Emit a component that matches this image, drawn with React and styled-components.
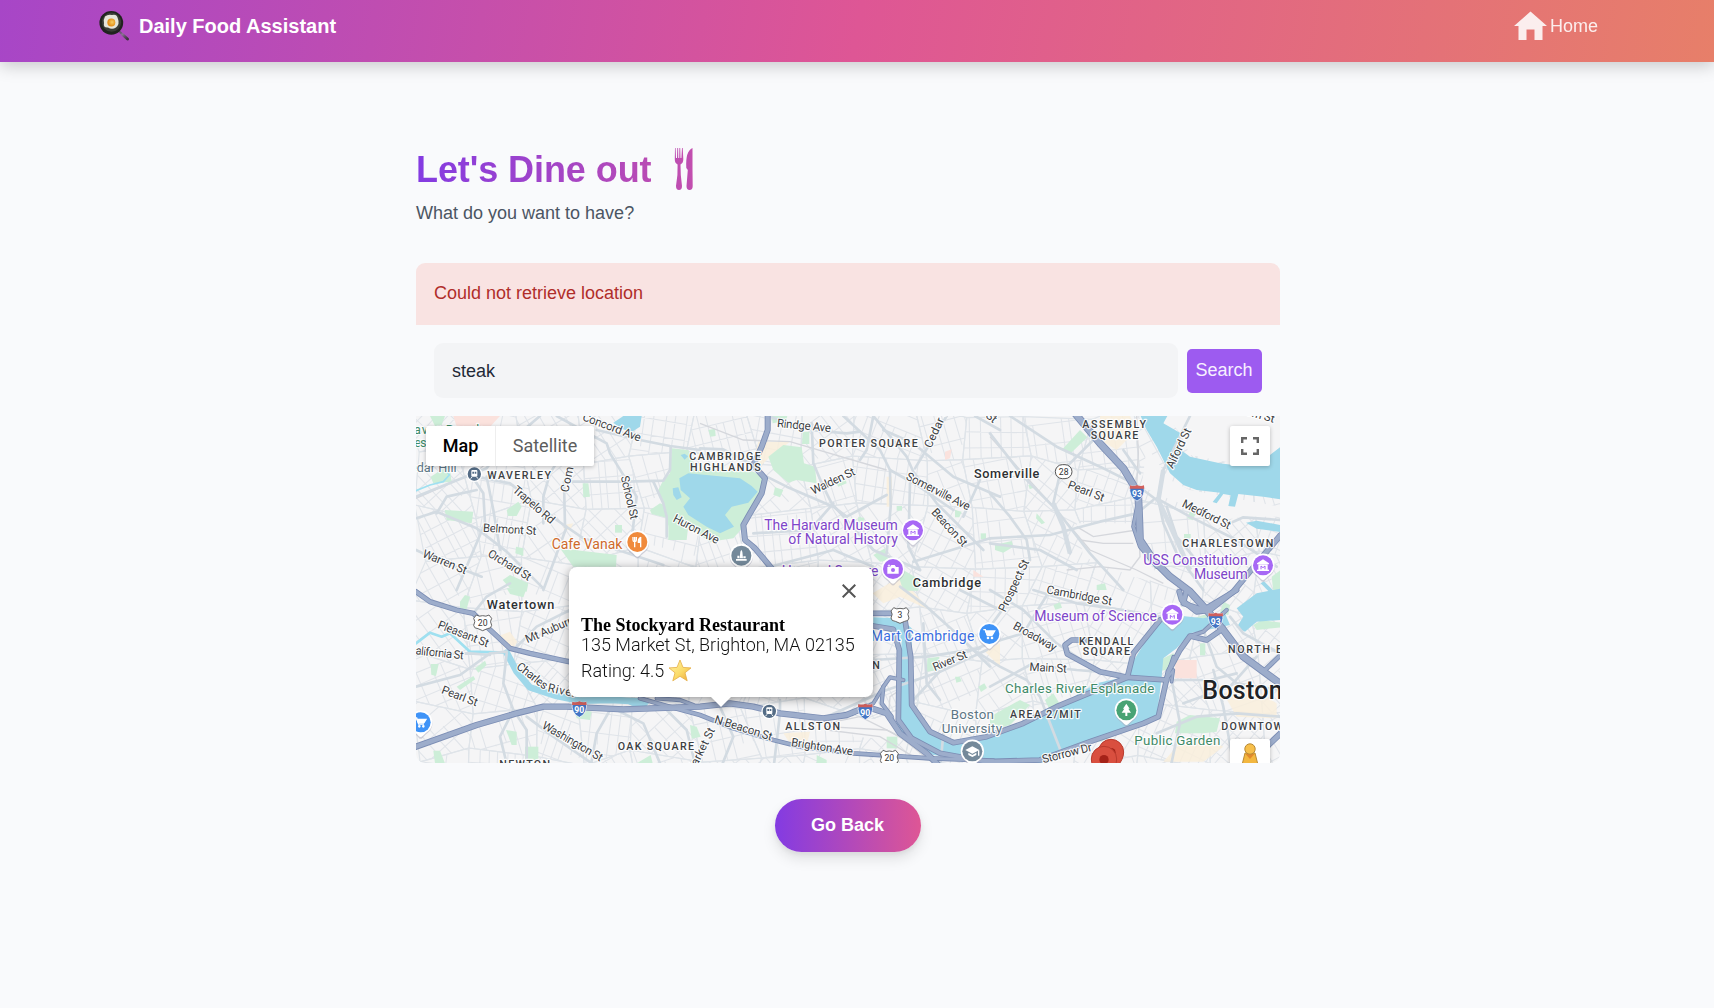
import React from "react";
import styled, { createGlobalStyle } from "styled-components";

const Global = createGlobalStyle`
  * { box-sizing: border-box; }
  body {
    margin: 0;
    background: #f9fafc;
    font-family: "Liberation Sans", Arial, sans-serif;
    font-size: 18px;
    color: #1f2937;
    overflow: hidden;
  }
  button, input { font: inherit; border: 0; outline: 0; }
`;

const Page = styled.div`
  min-height: 1008px;
  background: #f9fafc;
`;
const Header = styled.header`
  height: 62px;
  display: flex;
  align-items: center;
  justify-content: space-between;
  padding: 0 116px 11px 98px;
  color: #fff;
  background: linear-gradient(100deg, #a746c7 0%, #de5695 50%, #e77f69 100%);
  box-shadow: 0 4px 16px rgba(0, 0, 0, 0.2);
`;
const Brand = styled.div`
  display: flex;
  align-items: center;
  gap: 8px;
  font-size: 20px;
  font-weight: 700;
  span { padding-top: 2px; }
`;
const NavLink = styled.a`
  display: flex;
  align-items: center;
  gap: 2px;
  opacity: 0.88;
  span { padding-top: 2px; }
`;
const Main = styled.main`
  width: 864px;
  margin: 0 0 0 416px;
  padding-top: 82px;
`;
const TitleRow = styled.div`
  display: flex;
  align-items: center;
  gap: 23px;
  height: 52px;
  svg { margin-top: -2px; }
`;
const Title = styled.h1`
  margin: 0;
  font-size: 36px;
  line-height: 52px;
  letter-spacing: -0.08px;
  color: transparent;
  background: linear-gradient(to right, #833be2, #b94bb4);
  background-clip: text;
`;
const Subtitle = styled.p`
  margin: 4px 0 0;
  line-height: 27px;
  color: #4b5563;
`;
const Alert = styled.div`
  margin-top: 36px;
  height: 62px;
  padding: 17px 18px;
  line-height: 27px;
  color: #b02e2a;
  background: #f9e3e2;
  border-radius: 9px 9px 0 0;
`;
const SearchForm = styled.div`
  display: flex;
  align-items: center;
  gap: 9px;
  padding: 18px;
`;
const Field = styled.input`
  flex: 1;
  min-width: 0;
  height: 55px;
  padding: 2px 18px 0;
  border-radius: 9px;
  background: #f3f4f6;
  color: #1f2937;
`;
const SearchButton = styled.button`
  width: 75px;
  height: 44px;
  padding: 0 1px 0 0;
  border-radius: 5px;
  color: #f7f0ff;
  background: #9d5bf0;
`;
const MapFrame = styled.section`
  position: relative;
  height: 347px;
  overflow: hidden;
  border-radius: 0 0 9px 9px;
  font-family: Roboto, sans-serif;
  svg.canvas { display: block; }
`;
const TypeSwitch = styled.div`
  position: absolute;
  left: 10px;
  top: 10px;
  display: flex;
  height: 40px;
  background: #fff;
  border-radius: 2px;
  box-shadow: 0 1px 4px rgba(0, 0, 0, 0.25);
`;
const TypeButton = styled.button`
  width: ${(p) => p.$w}px;
  padding: 0 0 2px;
  background: transparent;
  font-size: 18px;
  font-weight: ${(p) => (p.$on ? 500 : 400)};
  color: ${(p) => (p.$on ? "#000" : "#5d5d5d")};
  border-left: ${(p) => (p.$on ? "0" : "1px solid #eee")};
`;
const Control = styled.button`
  position: absolute;
  right: 10px;
  top: ${(p) => p.$top}px;
  width: 40px;
  height: 40px;
  padding: 0;
  display: grid;
  place-items: center;
  background: #fff;
  border-radius: 2px;
  box-shadow: 0 1px 4px rgba(0, 0, 0, 0.25);
`;
const InfoWindow = styled.div`
  position: absolute;
  left: 153px;
  top: 151px;
  width: 304px;
  height: 130px;
  padding: 46px 12px 0;
  border-radius: 8px;
  background: #fff;
  color: #111;
  font-weight: 300;
  font-size: 18px;
  filter: drop-shadow(0 2px 5px rgba(0, 0, 0, 0.4));
  &::after {
    content: "";
    position: absolute;
    left: 141px;
    top: 129px;
    border: 11px solid transparent;
    border-top-color: #fff;
    border-bottom: 0;
  }
`;
const CloseIcon = styled.svg`
  position: absolute;
  right: 17px;
  top: 17px;
`;
const PlaceName = styled.div`
  font: 700 18px/24px "Liberation Serif", "Times New Roman", serif;
  color: #000;
  white-space: nowrap;
`;
const Address = styled.div`
  line-height: 15px;
  white-space: nowrap;
`;
const Rating = styled.div`
  display: flex;
  align-items: center;
  gap: 4px;
  height: 26px;
  margin-top: 5px;
`;
const Footer = styled.div`
  display: flex;
  justify-content: center;
  padding-top: 36px;
`;
const BackButton = styled.button`
  width: 146px;
  height: 53px;
  padding: 0 1px 0 0;
  border-radius: 27px;
  color: #fff;
  font-weight: 700;
  background: linear-gradient(to right, #833be2, #de5695);
  box-shadow: 0 7px 14px rgba(0, 0, 0, 0.1), 0 2px 5px rgba(0, 0, 0, 0.06);
`;

// Map sheets: each one is 870 x 540 map units (three units to a pixel).
const SHEET = { A: [0, 0], B: [870, 0], C: [1740, 0], D: [0, 540], E: [870, 540], F: [1740, 540] };

const WATER = [
  ["A", "M610 38L640 18H695L690 50L665 66L630 55Z"],
  ["A", "M788 235L805 232L815 262L800 270L790 255Z"],
  ["A", "M812 135l12-4 10 8-10 10z"],
  ["A", "M808 205L835 190L990 205L1025 228L1043 245L1015 278L965 290L945 315L972 350L930 370L890 350L835 315L820 290L840 265L812 240Z"],
  ["C", "M452 18H532L520 40L572 70L560 110L600 140L690 160L730 165L840 135L872 110V268L820 260L745 252L735 290L715 288L722 256L700 252L680 280L668 276L690 248L620 240L580 225L540 190L500 110L470 60Z"],
  ["C", "M768 338L800 332L872 345V366L800 356Z"],
  ["C", "M812 520l10-6 40 40h-16z"],
  ["F", "M740 55L800 10L872 -4V90L800 95L765 125L740 112L760 80Z"],
  ["F", "M500 100L550 75L640 85L705 70L720 105L640 122L600 130L560 175L520 205L515 260L500 385L300 455L200 500L150 520L-10 515L-170 495L-250 450L-280 400L-272 290L-265 150L-290 118L-350 112V82L-270 85L-235 115L-232 345L-180 430L-100 462L0 440L100 408L200 350L320 280L400 262Z"],
  ["E", "M-260 318L-150 335L-170 360L-210 345Z"],
];
const PARKS = [
  ["A", "M60 18H105L95 45L75 48Z"], ["A", "M62 200L118 165L125 215L70 220Z"],
  ["A", "M104 300L190 305L185 340L110 330Z"], ["A", "M290 300L325 275L335 290L320 318H294Z"],
  ["A", "M518 220H535L540 260L520 262Z"], ["A", "M615 345H636V368H615Z"], ["A", "M720 300L750 280L775 290V325L725 312Z"],
  ["A", "M450 415L620 435L618 470H490Z"], ["A", "M278 510L300 495L355 520L350 545L300 535Z"], ["A", "M318 410L340 415V438L316 430Z"],
  ["A", "M785 115L835 120L860 180L1030 185L1065 205L1035 290L1000 350L970 385L900 395L875 378L835 345L830 390H775V350L770 310L745 240L760 210L780 190Z"],
  ["A", "M895 60l20-4 2 22-16 2z"], ["B", "M205 140L250 105L305 112L312 160L345 170L350 220L290 210L265 218L220 180Z"],
  ["B", "M308 65H328V102H306Z"], ["B", "M215 18H262L258 32L218 40Z"], ["B", "M225 232L250 240L240 262L220 254Z"], ["B", "M410 222L436 205L440 220L415 230Z"],
  ["B", "M590 288H606V302H590Z"], ["B", "M765 300L785 305L778 322H765Z"], ["B", "M842 370h16v18h-16z"], ["B", "M520 435L555 415L565 450L540 455Z"],
  ["B", "M585 465L660 510L655 542H610Z"], ["B", "M475 320l18 4-4 16-16-4z"], ["C", "M215 120L270 60L292 82L240 132Z"],
  ["C", "M15 405L65 393L70 410L40 428L15 420Z"], ["C", "M140 310L165 338L155 343L138 325Z"], ["C", "M115 225l12-4 6 12-14 4z"],
  ["C", "M320 525l25-5 5 20h-30z"], ["C", "M600 305l16 8-8 18-16-8z"], ["C", "M582 372h20v12h-20z"], ["C", "M845 500L872 480V545H850Z"],
  ["D", "M150 35L165 15L180 20L170 58L150 54Z"], ["D", "M290 -5H350L340 22L300 12Z"], ["D", "M62 222h24l-8 36-14-4z"], ["D", "M195 235L225 212L230 225L205 248Z"],
  ["D", "M140 290L190 258L196 268L150 300Z"], ["D", "M288 420L320 425V465H305Z"], ["D", "M345 470H385V512H345Z"], ["D", "M70 482H90L105 520H75Z"],
  ["D", "M840 405L860 410L872 440L845 446Z"], ["D", "M490 355L545 365L540 390L500 385Z"], ["D", "M680 520L722 495L728 520Z"],
  ["E", "M682 205L718 200L715 240L680 245Z"], ["E", "M630 345L690 430L720 445L712 465L655 430L632 380Z"], ["E", "M560 440H592V475H560Z"],
  ["E", "M835 290l18-10 8 14-18 12z"], ["E", "M765 260l14 0 6 14-16 4z"], ["E", "M350 495L380 510V525H350Z"],
  ["F", "M0 380L90 330L120 345L60 405L0 420Z"], ["F", "M165 330L190 310L208 340L180 362Z"], ["F", "M560 395L600 375L690 385L680 425L640 430L555 430Z"],
  ["F", "M300 450L480 375L490 390L330 455Z"], ["F", "M510 210L550 190L562 215L530 240L512 242Z"], ["F", "M580 95L640 75L690 70L640 92L600 108Z"],
  ["F", "M790 105L815 90L872 98V112L800 120Z"], ["F", "M190 45l20-8 6 16-20 6z"], ["F", "M630 160h16v36h-16z"], ["F", "M700 35l20 10-5 30-25-6z"],
];
const SAND = [
  ["B", "M175 95L270 95L200 150L165 185L160 150Z"], ["C", "M330 18H420L440 60L380 120L330 90Z"],
  ["D", "M260 140L300 125L322 155L310 175L280 170Z"], ["E", "M518 10L600 -40L690 60L600 20L550 40Z"],
  ["E", "M250 430L330 425L320 465L270 460Z"], ["F", "M560 470L640 440L700 470L640 515H520Z"], ["F", "M700 310L780 290L860 340V385L740 380Z"],
  ["A", "M460 345L490 340L480 360H462Z"], ["E", "M850 180L900 160V230Z"], ["B", "M560 200H576V290H560Z"],
];
const PINK = [["A", "M130 18H270L240 50H140Z"], ["B", "M735 125L755 118L750 145L735 150Z"], ["F", "M555 210H620V265H555Z"], ["B", "M820 480L850 500H820Z"], ["F", "M640 275h22v40h-22z"]];
const PLAIN = [["C", "M470 110L540 210L600 240L870 290V320L760 320L700 330L600 290L520 260L455 230Z"], ["C", "M260 340L440 340L450 420L520 520L430 500L280 440Z"], ["C", "M530 18H872V130L730 160L600 135L570 70Z"], ["E", "M440 380L560 390L600 450L460 440Z"]];

const ARTERIALS = [
  ["A", "M18 260L230 175L270 120L390 18"], ["A", "M18 325L80 305L200 355L290 425L400 535"], ["A", "M180 190L220 250L225 340L140 540"],
  ["A", "M230 200L250 300L270 420"], ["A", "M200 200L300 220L440 330L520 385L640 425L760 465"], ["A", "M400 340L400 260L420 190L500 60"],
  ["A", "M465 350L462 215L500 150"], ["A", "M470 350L400 540"], ["A", "M480 215L650 215L760 212L780 180L782 110"], ["A", "M440 18L590 100L600 130L680 260L660 430"],
  ["A", "M560 60L690 90L780 108L870 120"], ["A", "M730 215L760 280L770 320L770 380"], ["A", "M80 310L110 260L200 240"], ["A", "M18 420L60 440L215 500"],
  ["B", "M0 115L70 118L160 165"], ["B", "M210 20L330 60L440 70L480 65"], ["B", "M335 40L340 160L370 230L395 280L520 420L660 480"],
  ["B", "M430 18L540 120L570 180L572 290L560 430"], ["B", "M520 18L620 140L640 185L710 280L850 420"], ["B", "M570 180L650 225L760 300"],
  ["B", "M550 60L640 100L760 200L900 260"], ["B", "M630 220L625 410L660 480"], ["B", "M200 200L260 230L400 290L440 320"], ["B", "M400 280L330 360L160 370"],
  ["B", "M440 320L560 255"], ["B", "M740 18L645 175"], ["B", "M825 18L900 60M640 455L870 385"], ["B", "M210 470L400 420L520 470"], ["B", "M840 210L790 320"], ["B", "M480 150L500 120L520 18"],
  ["C", "M0 70L100 200L200 300L300 430L400 540"], ["C", "M60 18L200 110L330 170L440 225L500 270"], ["C", "M310 90L210 190L190 280L220 350L240 430"],
  ["C", "M0 385L180 375L330 335L440 310L490 270"], ["C", "M600 18L520 180L505 270L520 340L560 430L640 540"], ["C", "M500 265L600 320L740 390L860 470"],
  ["C", "M530 290L560 380L610 440"], ["C", "M720 340L760 322L870 330"], ["C", "M0 250L60 320L110 390L120 450L60 540"], ["C", "M0 400L150 420L260 480"], ["C", "M400 120L450 190"],
  ["D", "M18 290L150 255L240 190L290 185"], ["D", "M290 190L280 280L310 360L270 440L290 520"], ["D", "M18 195L180 190L240 195"], ["D", "M310 360L350 420L350 540"],
  ["D", "M350 380L430 440L560 530"], ["D", "M190 70L230 20L300 -20"], ["D", "M310 180L380 110L480 60"], ["D", "M620 360L700 400L750 520"], ["D", "M760 350L830 420L860 540"], ["D", "M600 360L560 430L540 540"],
  ["E", "M240 330L240 370L220 540"], ["E", "M380 380L560 300L720 245L860 180"], ["E", "M520 210L680 200L840 175"], ["E", "M600 -10L680 50L780 140L870 230"],
  ["E", "M640 330L760 200L900 150"], ["E", "M670 100L680 280L720 330"], ["E", "M720 540L730 430"], ["E", "M60 350L100 440L60 540"], ["E", "M780 0L900 60"],
  ["F", "M0 0L100 60L200 160L320 240"], ["F", "M-50 180L30 230L110 270L150 320L180 400L215 490"], ["F", "M130 0L260 40L400 60L510 80"], ["F", "M0 290L120 225L260 240L390 250"],
  ["F", "M0 160L100 130L180 0"], ["F", "M640 120L680 230L740 280L870 300"], ["F", "M540 270H660L740 250"], ["F", "M545 270L570 400L540 540"],
  ["F", "M580 340L720 290L800 200"], ["F", "M500 430L620 380L740 370L870 380"], ["F", "M720 80L760 130L870 190"], ["F", "M0 110L80 0"], ["F", "M670 240L700 350L730 520"],
];
const RAILS = [
  ["B", "M0 40L130 90L270 95L560 180"], ["C", "M440 18L445 130L440 225L450 440L420 480L330 470L230 480"], ["C", "M0 80L190 290L300 420L440 480L520 520"],
  ["C", "M260 350L310 380L440 360"], ["C", "M270 390L340 400L430 400"], ["E", "M380 400L480 380L600 440L700 520"], ["E", "M380 410L560 420L650 470"], ["A", "M18 265L200 185L390 18"], ["E", "M380 420L540 440L640 500"], ["E", "M565 380L570 320L600 300"],
];
const HIGHWAYS = [
  ["B", "M203 10V60L185 110L160 165L195 205L185 250L150 310L130 345L135 390L165 415L215 475", 15],
  ["C", "M255 10L330 100L400 175L430 225L445 260L448 330L450 390L490 450L540 500L600 545L650 600L700 660L760 740L872 822", 20],
  ["C", "M445 270L430 350L450 410L500 470", 10], ["C", "M872 375L800 460L730 545L660 600L620 605L575 570L568 545", 15],
  ["F", "M510 90L430 190L412 262L200 350L100 400L-10 440L-110 458L-180 425L-235 345L-238 200L-255 90L-295 70H-350", 14],
  ["F", "M290 150L245 150L225 165L232 192L330 245L412 262L530 270", 14],
  ["F", "M700 115L650 150L600 138L570 180L535 245L525 290L505 380L460 400L300 455L150 510L-10 515L-150 490L-235 445L-275 390L-272 180L-290 118L-350 108", 14],
  ["F", "M590 0L580 40L640 60L740 0", 14], ["F", "M872 195L825 240", 12], ["F", "M872 430L830 470", 16], ["F", "M710 60L640 125L600 138", 10],
  ["F", "M550 200L525 275L550 240L545 275", 8],
  ["D", "M18 5L60 35L140 60L190 70L230 110L300 175L360 190L500 220", 13],
  ["D", "M18 470L200 405L320 370L400 350L470 350L640 358L870 350L960 340L1030 350L1110 370L1240 385L1310 375L1370 350L1430 370L1470 430L1550 490L1600 540", 16],
  ["D", "M690 325L760 345L870 375L970 415L1090 450L1170 470L1330 490L1560 505L1750 512", 11],
  ["E", "M610 270L570 262L550 290L545 340L575 380", 10], ["E", "M460 370L520 340L550 290", 9], ["E", "M-130 325L-60 330L-20 345", 10],
];

// Label: sheet, x1, y1, x2, y2 of the baseline, text, size, colour, weight.
const K = "#3c4043", P = "#7e45c9", G = "#3f8a68", S = "#5d7786";
const LABELS = [
  ["A", -38, 72, 218, 72, "Beaver Brook", 38, G], ["A", -88, 112, 50, 112, "Reserves", 38, G], ["A", -25, 187, 140, 187, "Cedar Hill", 38, S],
  ["A", 515, 30, 688, 95, "Concord Ave"], ["A", 475, 248, 497, 140, "Comm"], ["A", 632, 200, 662, 330, "School St"], ["A", 306, 243, 422, 343, "Trapelo Rd"],
  ["A", 218, 365, 378, 375, "Belmont St"], ["A", 35, 440, 165, 493, "Warren St"], ["A", 231, 437, 355, 513, "Orchard St"],
  ["A", 425, 416, 637, 416, "Cafe Vanak", 42, "#cf6a2b"], ["A", 232, 206, 423, 206, "WAVERLEY", 32, K, 500],
  ["A", 838, 150, 1052, 150, "CAMBRIDGE", 32, K, 500], ["A", 840, 184, 1052, 184, "HIGHLANDS", 32, K, 500], ["A", 787, 333, 920, 402, "Huron Ave"],
  ["B", 230, 51, 392, 66, "Rindge Ave"], ["B", 357, 111, 653, 111, "PORTER SQUARE", 32, K, 500], ["B", 340, 254, 468, 193, "Walden St"],
  ["B", 693, 116, 752, -10, "Cedar St"], ["B", 855, 20, 880, 40, "St"], ["B", 616, 207, 803, 302, "Somerville Ave"], ["B", 692, 308, 788, 412, "Beacon St"],
  ["B", 822, 203, 1018, 203, "Somerville", 38, "#2d3033", 500], ["B", 193, 360, 593, 360, "The Harvard Museum", 42, P], ["B", 265, 402, 594, 402, "of Natural History", 42, P],
  ["B", 245, 499, 535, 499, "Harvard Square", 42, P], ["B", 638, 532, 843, 532, "Cambridge", 38, "#2d3033", 500],
  ["C", 277, 54, 468, 54, "ASSEMBLY", 32, K, 500], ["C", 302, 87, 445, 87, "SQUARE", 32, K, 500], ["C", 548, 178, 605, 62, "Alford St"],
  ["C", 765, 14, 850, 38, "orn St"], ["C", 231, 233, 338, 275, "Pearl St"], ["C", 574, 289, 715, 358, "Medford St"], ["C", 577, 412, 850, 412, "CHARLESTOWN", 32, K, 500],
  ["C", 460, 466, 773, 466, "USS Constitution", 42, P], ["C", 612, 507, 773, 507, "Museum", 42, P],
  ["F", 46, 68, 118, -85, "Prospect St"], ["F", 168, 10, 364, 46, "Cambridge St"], ["F", 133, 94, 501, 94, "Museum of Science", 42, P], ["F", 67, 115, 192, 184, "Broadway"],
  ["F", 118, 242, 230, 248, "Main St"], ["F", 267, 164, 430, 164, "KENDALL", 32, K, 500], ["F", 278, 196, 420, 196, "SQUARE", 32, K, 500],
  ["F", 45, 310, 493, 310, "Charles River Esplanade", 40, G], ["F", 60, 384, 272, 384, "AREA 2/MIT", 32, K, 500], ["F", 714, 190, 930, 190, "NORTH END", 32, K, 500],
  ["F", 637, 326, 878, 326, "Boston", 75, "#202326", 500], ["F", 694, 420, 905, 420, "DOWNTOWN", 32, K, 500], ["F", 433, 466, 691, 466, "Public Garden", 40, G], ["F", 160, 520, 308, 482, "Storrow Dr"],
  ["E", 430, 153, 823, 153, "Wal Mart Cambridge", 42, "#3b6fe0"], ["E", 704, 244, 804, 202, "River St"], ["E", 256, 419, 420, 419, "ALLSTON", 32, K, 500], ["E", 517, 236, 540, 236, "N", 32, K, 500],
  ["E", 752, 388, 882, 388, "Boston", 40, S], ["E", 725, 430, 906, 430, "University", 40, S], ["E", 41, 398, 213, 452, "N Beacon St"], ["E", 272, 468, 457, 496, "Brighton Ave"], ["E", -22, 556, 46, 420, "Market St"],
  ["D", 230, 58, 433, 58, "Watertown", 38, "#2d3033", 500], ["D", 81, 113, 231, 172, "Pleasant St"], ["D", 352, 160, 530, 84, "Mt Auburn St"], ["D", -5, 191, 160, 208, "California St"],
  ["D", 317, 234, 403, 300, "Charles"], ["D", 412, 304, 496, 322, "River"], ["D", 92, 309, 198, 349, "Pearl St"], ["D", 394, 413, 570, 515, "Washington St"], ["D", 623, 480, 852, 480, "OAK SQUARE", 32, K, 500], ["D", 268, 533, 420, 533, "NEWTON", 32, K, 500],
];
// Pins: sheet, centre x, centre y, colour, glyph
const PINS = [
  ["A", 682, 396, "#f08a3c", "food"], ["B", 124, 437, "#74899a", "monument"], ["B", 639, 361, "#a768f5", "museum"], ["B", 579, 477, "#a768f5", "camera"],
  ["C", 819, 466, "#a768f5", "museum"], ["F", 547, 74, "#a768f5", "museum"], ["E", 868, 132, "#3f93f7", "cart"], ["D", 32, 397, "#3f93f7", "cart"],
  ["F", 409, 361, "#48a374", "tree"], ["E", 817, 484, "#74899a", "school"],
];
const GLYPHS = {
  food: <g stroke="#fff" strokeWidth="4" fill="none"><path d="M-13-15v9q0 5 5 5t5-5v-9M-8-15V16" /><path d="M10-15V16M10-14q-8 5-7 15h7" fill="#fff" /></g>,
  museum: <g fill="#fff"><path d="M-18-6L0-18L18-6V-3H-18Z" /><path d="M-14-3h28v17h-28z" /><path d="M-18 13h36v4h-36z" /><path d="M-6 12V2L0 7L6 2V12" stroke="#a768f5" strokeWidth="3" fill="none" /></g>,
  camera: <g fill="#fff"><path d="M-17-6h8l4-6h10l4 6h8v20h-34z" /><circle cy="3" r="6" fill="#a768f5" /><path d="M-17-10q5 0 5-6q0 6 5 6q-5 0-5 6q0-6-5-6" /></g>,
  monument: <g fill="#fff"><path d="M-16 10h32v5h-32zM-5 8L-3-12L0-18L3-12L5 8ZM-12 8V0h6v8zM6 8V2h7v6z" /></g>,
  cart: <g fill="none" stroke="#fff" strokeWidth="4"><path d="M-18-13h6L-6 5H10" /><path d="M-11-9H16L10 1H-7Z" fill="#fff" /><circle cx="-4" cy="12" r="2" /><circle cx="8" cy="12" r="2" /></g>,
  tree: <path fill="#fff" d="M0-20L10-5H6L14 7H3V17H-3V7H-14L-6-5H-10Z" />,
  school: <g fill="#fff"><path d="M-21-4L0-15L21-4L0 7Z" /><path d="M-12 4V11L0 17L12 11V4L0 11ZM17-3h4v16h-4z" /></g>,
};

function rnd(n) {
  const v = Math.sin(n * 127.1 + 31.7) * 43758.5453;
  return v - Math.floor(v);
}
// Blocks of side streets, one direction for each neighbourhood.
const blocks = [];
for (let r = 0; r < 8; r++) {
  for (let c = 0; c < 16; c++) {
    const corner = (i, j) => [i * 168 - 30 + rnd(i * 17 + j * 53) * 80, j * 150 - 40 + rnd(i * 29 + j * 71 + 5) * 70];
    const poly = [corner(c, r), corner(c + 1, r), corner(c + 1, r + 1), corner(c, r + 1)];
    const seed = r * 40 + c;
    const cx = poly.reduce((s, p) => s + p[0], 0) / 4;
    const cy = poly.reduce((s, p) => s + p[1], 0) / 4;
    const sx = 24 + rnd(seed + 3) * 16;
    const sy = 38 + rnd(seed + 8) * 30;
    let d = "";
    for (let x = -170; x < 170; x += sx) {
      const o = (rnd(seed + x) - 0.5) * 10;
      const from = -170 + Math.floor(rnd(seed * 3 + x) * 4) * sy;
      const to = 170 - Math.floor(rnd(seed * 5 + x) * 3) * sy;
      d += `M${x + o} ${from}L${x + o + 4} ${to}`;
    }
    for (let y = -170; y < 170; y += sy) d += `M-170 ${y}L170 ${y + (rnd(seed + y) - 0.5) * 14}`;
    blocks.push({ id: `b${seed}`, points: poly.map((p) => p.join(",")).join(" "), d, t: `translate(${cx} ${cy}) rotate(${Math.round(rnd(seed + 1) * 90 - 45)})` });
  }
}

function Layer({ items, ...rest }) {
  return items.map(([s, d], i) => <path key={i} d={d} transform={`translate(${SHEET[s].join(" ")})`} {...rest} />);
}
function Roads({ items, extra, stroke }) {
  return items.map(([s, d, w], i) => (
    <path key={i} d={d} transform={`translate(${SHEET[s].join(" ")})`} fill="none" stroke={stroke} strokeWidth={w + extra} strokeLinejoin="round" strokeLinecap="round" />
  ));
}
function Label({ item }) {
  const [s, x1, y1, x2, y2, text, size = 35, color = K, weight = 400] = item;
  const a = (Math.atan2(y2 - y1, x2 - x1) * 180) / Math.PI;
  const [ox, oy] = SHEET[s];
  return (
    <text transform={`translate(${x1 + ox} ${y1 + oy}) rotate(${a})`} textLength={Math.hypot(x2 - x1, y2 - y1)} fontSize={size} fontWeight={weight} fill={color} stroke="#fff" strokeOpacity="0.9" strokeWidth="7" strokeLinejoin="round" paintOrder="stroke">
      {text}
    </text>
  );
}
function Interstate({ x, y, n }) {
  return (
    <g transform={`translate(${x} ${y})`}>
      <path d="M-21-22Q-10-18 0-23Q10-18 21-22Q26 12 0 24Q-26 12-21-22Z" fill="#4475c4" stroke="#fff" strokeWidth="2" />
      <path d="M-21-23Q-10-19 0-24Q10-19 21-23L22-13H-22Z" fill="#d2605c" />
      <text textAnchor="middle" y="12" fontSize="26" fontWeight="700" fill="#fff">{n}</text>
    </g>
  );
}
function Route({ x, y, n, round }) {
  return (
    <g transform={`translate(${x} ${y})`}>
      {round ? <rect x="-25" y="-21" width="50" height="42" rx="21" fill="#fff" stroke="#555" strokeWidth="3" /> : <path d="M-19-23Q-10-17 0-21Q10-17 19-23L27-13Q20-4 27 8Q26 18 14 18L0 24L-14 18Q-26 18-27 8Q-20-4-27-13Z" fill="#fff" stroke="#666" strokeWidth="3" />}
      <text textAnchor="middle" y="9" fontSize="26" fill="#333">{n}</text>
    </g>
  );
}
function Station({ x, y }) {
  return (
    <g transform={`translate(${x} ${y})`}>
      <circle r="22" fill="#546c86" stroke="#fff" strokeWidth="4" />
      <rect x="-9" y="-12" width="18" height="20" rx="3" fill="#fff" />
      <path d="M-6-7h5v6h-5zM1-7h5v6h-5z" fill="#546c86" />
      <path d="M-7 9l-4 5M7 9l4 5" stroke="#fff" strokeWidth="3" />
    </g>
  );
}
function Marker({ x, y }) {
  return (
    <g transform={`translate(${x} ${y})`}>
      <path d="M0-38A38 38 0 0 1 38 0C38 32 6 50 0 90C-6 50-38 32-38 0A38 38 0 0 1 0-38Z" fill="#d94f3f" stroke="#b93a2d" strokeWidth="3" />
      <circle cy="2" r="14" fill="#a52218" />
    </g>
  );
}

function CityMap() {
  return (
    <svg className="canvas" width="864" height="347" viewBox="18 18 2592 1041" fontFamily="Roboto, sans-serif">
      <rect x="0" y="0" width="2700" height="1100" fill="#f5f5f6" />
      {blocks.map((b) => (
        <g key={b.id}>
          <clipPath id={b.id}><polygon points={b.points} /></clipPath>
          <g clipPath={`url(#${b.id})`}>
            <path d={b.d} transform={b.t} fill="none" stroke="#e0e4e9" strokeWidth="3.2" />
          </g>
          <polygon points={b.points} fill="none" stroke="#dfe4e9" strokeWidth="3.5" />
        </g>
      ))}
      <Layer items={PLAIN} fill="#f5f5f6" />
      <Layer items={SAND} fill="#f9efdc" opacity="0.85" />
      <Layer items={PINK} fill="#fbe2dd" />
      <Layer items={PARKS} fill="#cdeed8" />
      <Layer items={WATER} fill="#9fd8ea" />
      <g fill="none" stroke="#9fe0f0" strokeLinecap="round" strokeLinejoin="round">
        <path d="M18 242L60 225L100 215L118 195L105 175" strokeWidth="5" />
        <path d="M18 700L60 668L95 680L120 670L180 725L290 728" strokeWidth="8" />
        <path d="M290 728L320 785L360 832L440 858L510 872L600 870L690 874" strokeWidth="20" stroke="#9fd8ea" />
      </g>
      <Layer items={RAILS} fill="none" stroke="#d5d7dc" strokeWidth="4" />
      <Layer items={ARTERIALS} fill="none" stroke="#d3dbe2" strokeWidth="8" strokeLinejoin="round" strokeLinecap="round" />
      <path d="M1930 280L1960 350L1980 430M2260 180L2245 270L2300 390L2340 480" fill="none" stroke="#d5dde4" strokeWidth="14" strokeLinejoin="round" />
      <Roads items={HIGHWAYS} extra={3} stroke="#7b8db4" />
      <Roads items={HIGHWAYS} extra={-2} stroke="#9dadcb" />
      {LABELS.map((l, i) => <Label key={i} item={l} />)}
      <Interstate x={2181} y={249} n="93" />
      <Interstate x={2417} y={632} n="93" />
      <Interstate x={508} y={898} n="90" />
      <Interstate x={1366} y={905} n="90" />
      <Route x={1961} y={185} n="28" round />
      <Route x={218} y={638} n="20" />
      <Route x={1470} y={616} n="3" />
      <Route x={1438} y={1044} n="20" />
      <Station x={193} y={192} />
      <Station x={1078} y={904} />
      {PINS.map(([s, x, y, color, glyph], i) => (
        <g key={i} transform={`translate(${x + SHEET[s][0]} ${y + SHEET[s][1]})`}>
          <path d="M-24 26Q-14 34-6 43Q0 50 6 43Q14 34 24 26A35 35 0 1 0-24 26Z" fill="#aab" opacity="0.5" transform="translate(0 3)" />
          <path d="M-24 25Q-14 32-6 41Q0 47 6 41Q14 32 24 25A35 35 0 1 0-24 25Z" fill="#fff" />
          <circle r="30" fill={color} />
          {GLYPHS[glyph]}
        </g>
      ))}
      <Marker x={2103} y={1026} />
      <Marker x={2082} y={1047} />
    </svg>
  );
}

function PanIcon() {
  return (
    <svg width="33" height="32" viewBox="0 0 33 32">
      <defs>
        <radialGradient id="yolk" cx=".6" cy=".45"><stop offset="0" stopColor="#f7ce62" /><stop offset="1" stopColor="#e38d16" /></radialGradient>
        <linearGradient id="handle" x1="0" y1="0" x2="1" y2="1"><stop offset="0" stopColor="#8a6f93" /><stop offset=".5" stopColor="#5c4a62" /><stop offset="1" stopColor="#3a333c" /></linearGradient>
      </defs>
      <path d="M21.5 21.5L24.5 24.5" stroke="#6f5878" strokeWidth="1.8" />
      <path d="M24.5 24.5L29.5 29" stroke="url(#handle)" strokeWidth="3" strokeLinecap="round" />
      <circle cx="13.3" cy="12.8" r="11.9" fill="#20231f" />
      <circle cx="13.5" cy="12.2" r="9.6" fill="#3a3d37" />
      <path d="M7 6.5Q10 4 14 5Q19 3.500 20 9Q22 14 18 17.500Q14 20 10 17.500Q5 18 6 13Q5 10 7 6.500Z" fill="#e6e6da" />
      <circle cx="13.3" cy="12.6" r="4" fill="url(#yolk)" />
    </svg>
  );
}
function CutleryIcon() {
  return (
    <svg width="20" height="44" viewBox="0 0 20 44">
      <defs><linearGradient id="cut"><stop offset="0" stopColor="#bb4db3" /><stop offset="1" stopColor="#c44eae" /></linearGradient></defs>
      <path fill="url(#cut)" d="M1 1L1.6 1L2 11H3L3.3 1H4.1L4.3 11H5.2L5.4 1H6.2L6.5 11H7.4L8 1H8.7L9.3 12Q9.4 16 6.5 17.5L6.8 28L8 39Q8 43 5 43Q2 43 2 39L3.4 28L3.6 17.5Q.6 16 .8 12Z" />
      <path fill="url(#cut)" d="M18.500 1V22L18.700 39Q18.700 43 15.600 43Q12.500 43 12.500 39L13.800 23L12.300 21Q11.300 4 18.500 1Z" />
    </svg>
  );
}
function StarIcon() {
  return (
    <svg width="24" height="23" viewBox="0 0 24 23">
      <defs><linearGradient id="star" x1="0" y1="0" x2="1" y2="1"><stop offset="0" stopColor="#fff3a8" /><stop offset=".55" stopColor="#fbdc6b" /><stop offset="1" stopColor="#eda536" /></linearGradient></defs>
      <path d="M12 1L15 8.4L23 8.9L17 13.8L19.2 21.8L12 17.3L4.8 21.8L7 13.8L1 8.9L9 8.4Z" fill="url(#star)" stroke="#e5ad45" strokeWidth=".8" strokeLinejoin="round" />
    </svg>
  );
}

export default function App() {
  return (
    <Page>
      <Global />
      <Header>
        <Brand><PanIcon /><span>Daily Food Assistant</span></Brand>
        <NavLink>
          <svg width="35" height="32" viewBox="0 0 35 32"><path d="M17.5 1.5L34 16H29.5V30H21.5V19.5H13.5V30H5.5V16H1Z" fill="#fff" /></svg>
          <span>Home</span>
        </NavLink>
      </Header>
      <Main>
        <TitleRow><Title>Let's Dine out</Title><CutleryIcon /></TitleRow>
        <Subtitle>What do you want to have?</Subtitle>
        <Alert>Could not retrieve location</Alert>
        <SearchForm>
          <Field defaultValue="steak" />
          <SearchButton>Search</SearchButton>
        </SearchForm>
        <MapFrame>
          <CityMap />
          <TypeSwitch>
            <TypeButton $on $w={69}>Map</TypeButton>
            <TypeButton $w={99}>Satellite</TypeButton>
          </TypeSwitch>
          <Control $top={10}>
            <svg width="18" height="18" viewBox="0 0 18 18" fill="none" stroke="#666" strokeWidth="2.4"><path d="M1.2 6V1.2H6M12 1.2H16.8V6M16.8 12V16.8H12M6 16.8H1.2V12" /></svg>
          </Control>
          <Control $top={323}>
            <svg width="24" height="36" viewBox="0 0 24 36">
              <path d="M7 12H17L20 24L17 25V36H7V25L4 24Z" fill="#f3b73f" stroke="#b88a35" />
              <path d="M7.5 13L12 18L16.5 13Z" fill="#e2892d" />
              <circle cx="12" cy="8" r="5.2" fill="#f7bf4b" stroke="#b88a35" />
            </svg>
          </Control>
          <InfoWindow>
            <CloseIcon width="14" height="14" viewBox="0 0 14 14" stroke="#555" strokeWidth="2"><path d="M.7.7L13.3 13.3M13.3.7L.7 13.3" /></CloseIcon>
            <PlaceName>The Stockyard Restaurant</PlaceName>
            <Address>135 Market St, Brighton, MA 02135</Address>
            <Rating>Rating: 4.5 <StarIcon /></Rating>
          </InfoWindow>
        </MapFrame>
        <Footer><BackButton>Go Back</BackButton></Footer>
      </Main>
    </Page>
  );
}
